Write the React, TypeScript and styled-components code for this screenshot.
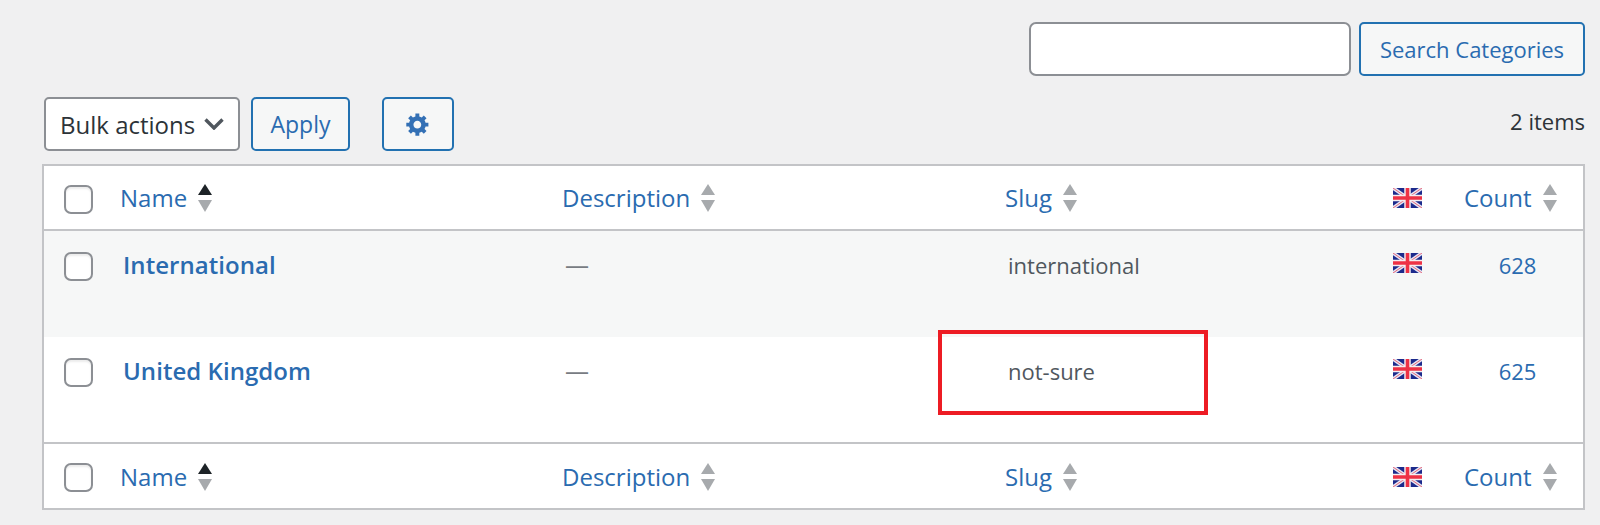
import React from "react";
import styled, { createGlobalStyle } from "styled-components";

const Global = createGlobalStyle`
  html, body { margin: 0; padding: 0; background: #f0f0f1; }
  body { font-family: "Open Sans", "Noto Sans", sans-serif; font-size: 22px; color: #3c434a; }
`;

const Page = styled.div`
  padding: 22px 15px 0 42px;
`;

const SearchBar = styled.div`
  display: flex;
  justify-content: flex-end;
  gap: 8px;
`;

const SearchInput = styled.input`
  box-sizing: border-box;
  width: 322px;
  height: 54px;
  background: #fff;
  border: 2px solid #8c8f94;
  border-radius: 7px;
`;

const OutlineButton = styled.button<{ $w: number; $size?: number }>`
  box-sizing: border-box;
  width: ${(p) => p.$w}px;
  height: 54px;
  padding: 0;
  display: inline-flex;
  align-items: center;
  justify-content: center;
  font: inherit;
  font-size: ${(p) => p.$size ?? 22}px;
  color: #2a6bb0;
  background: #f6f7f7;
  border: 2px solid #2271b1;
  border-radius: 5px;
`;

const TableNav = styled.div`
  display: flex;
  align-items: center;
  margin: 21px 0 13px 2px;
`;

const BulkSelect = styled.div`
  box-sizing: border-box;
  width: 196px;
  height: 54px;
  padding: 0 14px 0 14px;
  display: flex;
  align-items: center;
  justify-content: space-between;
  font-size: 24px;
  color: #2c3338;
  background: #fff;
  border: 2px solid #8c8f94;
  border-radius: 5px;
`;

const ApplyGap = styled.div`
  width: 11px;
`;

const GearGap = styled.div`
  width: 32px;
`;

const ItemCount = styled.div`
  margin-left: auto;
  color: #2c3338;
  transform: translateY(-3px);
`;

const Table = styled.table`
  box-sizing: border-box;
  width: 1543px;
  table-layout: fixed;
  border-collapse: separate;
  border-spacing: 0;
  background: #fff;
  border: 2px solid #c3c4c7;
`;

const HeadCell = styled.th<{ $foot?: boolean; $w?: number }>`
  box-sizing: border-box;
  ${(p) => (p.$w ? `width: ${p.$w}px;` : "")}
  height: ${(p) => (p.$foot ? 66 : 65)}px;
  padding: ${(p) => (p.$foot ? "1px" : "0")} 0 0 14px;
  font-size: 24px;
  font-weight: 400;
  text-align: left;
  vertical-align: middle;
  ${(p) => (p.$foot ? "border-top: 2px solid #c3c4c7;" : "border-bottom: 2px solid #c3c4c7;")}
`;

const CheckCell = styled(HeadCell)`
  padding: 3px 0 0 20px;
`;

const HeadLink = styled.span`
  display: inline-flex;
  align-items: center;
  gap: 11px;
  color: #2a6bb0;
`;

const SortIcon = styled.svg`
  display: block;
  width: 14px;
  height: 28px;
`;

const Row = styled.tr<{ $alt?: boolean }>`
  background: ${(p) => (p.$alt ? "#f6f7f7" : "#fff")};
`;

const BodyCell = styled.td<{ $h: number }>`
  height: ${(p) => p.$h}px;
  padding: 18px 0 0 17px;
  vertical-align: top;
  box-sizing: border-box;
  line-height: 32px;
  color: #50575e;
`;

const CountCell = styled(BodyCell)`
  padding-left: 2px;
  text-align: center;
  color: #2a6bb0;
`;

const BodyCheckCell = styled(BodyCell)`
  padding: 21px 0 0 20px;
`;

const FlagCell = styled(BodyCell)`
  padding: 22px 0 0 14px;
`;

const TermName = styled.span`
  font-size: 24px;
  font-weight: 600;
  letter-spacing: 0.05px;
  color: #2a6bb0;
`;

const Dash = styled.span`
  font-size: 24px;
  color: #787c82;
`;

const Check = styled.input.attrs({ type: "checkbox" })`
  appearance: none;
  display: block;
  box-sizing: border-box;
  width: 29px;
  height: 29px;
  margin: 0;
  background: #fff;
  border: 2px solid #8c8f94;
  border-radius: 7px;
  box-shadow: inset 0 2px 2px rgba(0, 0, 0, 0.08);
`;

const SlugMark = styled.div`
  position: relative;
`;

const RedBox = styled.div`
  position: absolute;
  left: -70px;
  top: -25px;
  width: 270px;
  height: 85px;
  box-sizing: border-box;
  border: 4px solid #ed1c24;
`;

const FlagSvg = styled.svg`
  display: block;
  width: 29px;
  height: 20px;
`;

const Flag = () => (
  <FlagSvg viewBox="0 0 29 20" aria-hidden="true">
    <defs>
      <filter id="fb" x="0" y="0" width="100%" height="100%">
        <feGaussianBlur stdDeviation="0.45" />
      </filter>
    </defs>
    <g filter="url(#fb)">
      <rect width="29" height="20" fill="#1c2a8c" />
      <path d="M0 0L29 20M29 0L0 20" stroke="#e4e6f4" strokeWidth="3.6" />
      <path d="M0 0L29 20M29 0L0 20" stroke="#e8667a" strokeWidth="1" />
      <path d="M14.5 0V20M0 10H29" stroke="#f6eef0" strokeWidth="6.5" />
      <path d="M14.5 0V20M0 10H29" stroke="#ee3344" strokeWidth="3.6" />
    </g>
  </FlagSvg>
);

const Sort = ({ active }: { active?: boolean }) => (
  <SortIcon viewBox="0 0 14 28" aria-hidden="true">
    <path d="M7 0L14 11H0Z" fill={active ? "#1d2327" : "#a7aaad"} />
    <path d="M7 28L0 16H14Z" fill="#a7aaad" />
  </SortIcon>
);

const Gear = styled.svg`
  display: block;
  width: 26px;
  height: 26px;
  fill: #3370b5;
`;

const Chevron = styled.svg`
  display: block;
  width: 20px;
  height: 12px;
  fill: none;
  stroke: #50575e;
  stroke-width: 3.4;
`;

const Header = ({ foot }: { foot?: boolean }) => (
  <Row>
    <CheckCell $w={62} $foot={foot}>
      <Check />
    </CheckCell>
    <HeadCell $w={442} $foot={foot}>
      <HeadLink>
        Name <Sort active />
      </HeadLink>
    </HeadCell>
    <HeadCell $w={443} $foot={foot}>
      <HeadLink>
        Description <Sort />
      </HeadLink>
    </HeadCell>
    <HeadCell $w={388} $foot={foot}>
      <HeadLink>
        Slug <Sort />
      </HeadLink>
    </HeadCell>
    <HeadCell $w={71} $foot={foot}>
      <Flag />
    </HeadCell>
    <HeadCell $foot={foot}>
      <HeadLink>
        Count <Sort />
      </HeadLink>
    </HeadCell>
  </Row>
);

const terms = [
  { name: "International", slug: "international", count: 628, alt: true, h: 106 },
  { name: "United Kingdom", slug: "not-sure", count: 625, alt: false, marked: true, h: 105 },
];

export default function App() {
  return (
    <Page>
      <Global />
      <SearchBar>
        <SearchInput />
        <OutlineButton $w={226}>Search Categories</OutlineButton>
      </SearchBar>
      <TableNav>
        <BulkSelect>
          Bulk actions
          <Chevron viewBox="0 0 20 12" aria-hidden="true">
            <path d="M1.5 1.5L10 10L18.5 1.5" />
          </Chevron>
        </BulkSelect>
        <ApplyGap />
        <OutlineButton $w={99} $size={23}>
          Apply
        </OutlineButton>
        <GearGap />
        <OutlineButton $w={72}>
          <Gear viewBox="0 0 20 20" aria-hidden="true">
            <path d="M18 12h-2.18c-.17.7-.44 1.35-.81 1.93l1.54 1.54-2.1 2.1-1.54-1.54c-.58.36-1.23.63-1.91.79V19H8v-2.18c-.68-.16-1.33-.43-1.91-.79l-1.54 1.54-2.12-2.12 1.54-1.54c-.36-.58-.63-1.23-.79-1.91H1V9.03h2.17c.16-.7.44-1.35.8-1.94L2.43 5.55l2.1-2.1 1.54 1.54c.58-.37 1.24-.64 1.93-.81V2h3v2.18c.68.16 1.33.43 1.91.79l1.54-1.54 2.12 2.12-1.54 1.54c.36.59.64 1.24.8 1.94H18V12zm-8.5 1.5c1.66 0 3-1.34 3-3s-1.34-3-3-3-3 1.34-3 3 1.34 3 3 3z" />
          </Gear>
        </OutlineButton>
        <ItemCount>2 items</ItemCount>
      </TableNav>
      <Table>
        <thead>
          <Header />
        </thead>
        <tbody>
          {terms.map((t) => (
            <Row key={t.slug} $alt={t.alt}>
              <BodyCheckCell $h={t.h}>
                <Check />
              </BodyCheckCell>
              <BodyCell $h={t.h}>
                <TermName>{t.name}</TermName>
              </BodyCell>
              <BodyCell $h={t.h}>
                <Dash>—</Dash>
              </BodyCell>
              <BodyCell $h={t.h}>
                <SlugMark>
                  {t.marked && <RedBox />}
                  {t.slug}
                </SlugMark>
              </BodyCell>
              <FlagCell $h={t.h}>
                <Flag />
              </FlagCell>
              <CountCell $h={t.h}>{t.count}</CountCell>
            </Row>
          ))}
        </tbody>
        <tfoot>
          <Header foot />
        </tfoot>
      </Table>
    </Page>
  );
}
